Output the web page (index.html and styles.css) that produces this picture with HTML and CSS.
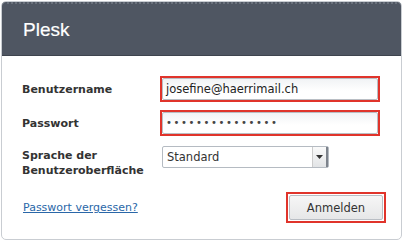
FILE: index.html
```html
<!DOCTYPE html>
<html>
<head>
<meta charset="utf-8">
<link rel="stylesheet" href="styles.css">
</head>
<body>
<div class="panel">
  <div class="head"><span class="title">Plesk</span></div>
  <div class="body">
    <div class="form">
      <label class="lbl">Benutzername</label>
      <div class="hl"><div class="field">josefine@haerrimail.ch</div></div>
      <label class="lbl">Passwort</label>
      <div class="hl"><div class="field dots">•••••••••••••••</div></div>
      <label class="lbl top">Sprache der Benutzeroberfläche</label>
      <div class="select"><span class="val">Standard</span><span class="arrow"><svg width="7" height="4" viewBox="0 0 7 4"><path d="M0 0h7L3.5 4z" fill="#333"/></svg></span></div>
    </div>
    <div class="foot">
      <a class="link" href="#">Passwort vergessen?</a>
      <div class="btnwrap"><div class="btn">Anmelden</div></div>
    </div>
  </div>
</div>
</body>
</html>
```
FILE: styles.css
```css
html, body { margin: 0; padding: 0; background: #fff; }
body { padding: 1px 2px 1px 1px; font-family: "DejaVu Sans", Verdana, sans-serif; color: #333; }
.panel {
  border: 1px solid #c9cdd2;
  border-radius: 5px;
  height: 239px;
  box-sizing: border-box;
  overflow: hidden;
  width: 401px;
}
.head {
  height: 54px;
  background: #4f5662;
  border-top: 2px dotted #6a717c;
  border-bottom: 1px solid #3e444e;
  box-sizing: border-box;
  display: flex;
  align-items: center;
  padding-left: 21px;
  padding-top: 1px;
}
.title { font-family: "Liberation Sans", Arial, sans-serif; font-size: 19px; color: #fff; -webkit-text-stroke: 0.2px #fff; }
.body { padding: 20px 15px 0 20px; }
.form {
  display: grid;
  grid-template-columns: 138px 220px;
  row-gap: 8px;
  align-items: center;
}
.lbl { font-weight: bold; font-size: 11px; color: #333; line-height: 15px; }
.lbl.top { align-self: start; padding-top: 4px; width: 128px; }
.hl { border: 2px solid #e0342b; height: 26px; box-sizing: border-box; }
.field {
  height: 22px;
  border: 1px solid #b9bec4;
  border-radius: 2px;
  box-sizing: border-box;
  background: linear-gradient(#f1f3f5, #fff 60%);
  font-size: 11.5px;
  line-height: 20px;
  padding-left: 3px;
  color: #222;
}
.dots { font-size: 10px; letter-spacing: 1.6px; color: #444; }
.select {
  margin: 2px 0 0 2px;
  width: 167px;
  height: 22px;
  box-sizing: border-box;
  border: 1px solid #b5bbc2;
  border-radius: 2px;
  display: flex;
  align-items: center;
  justify-content: space-between;
  font-size: 11.5px;
  padding-left: 4px;
  align-self: start;
}
.arrow {
  width: 13px;
  height: 20px;
  background: linear-gradient(#fafafa, #e2e4e6);
  border-left: 1px solid #ccc;
  border-right: 2px solid #7d838c;
  display: flex;
  align-items: center;
  justify-content: center;
}
.foot {
  display: flex;
  justify-content: space-between;
  align-items: center;
  margin-top: 14px;
}
.link { color: #2a67a8; font-size: 11px; text-decoration: underline; padding-left: 1px; }
.btnwrap { border: 2px solid #e0342b; width: 100px; height: 31px; box-sizing: border-box; padding: 1px; }
.btn {
  height: 25px;
  border: 1px solid #b9bec4;
  border-radius: 2px;
  background: linear-gradient(#f6f6f6, #e6e7e8);
  font-size: 11.5px;
  display: flex;
  align-items: center;
  justify-content: center;
  color: #333;
  box-sizing: border-box;
}
```
